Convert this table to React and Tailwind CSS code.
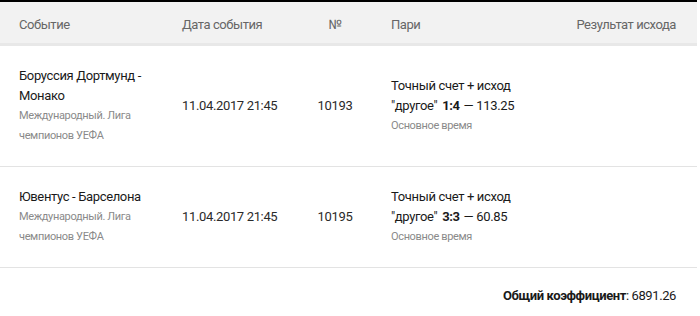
const bets = [
  {
    id: 10193,
    event: "Боруссия Дортмунд - Монако",
    league: "Международный. Лига чемпионов УЕФА",
    date: "11.04.2017 21:45",
    score: "1:4",
    odds: "113.25",
  },
  {
    id: 10195,
    event: "Ювентус - Барселона",
    league: "Международный. Лига чемпионов УЕФА",
    date: "11.04.2017 21:45",
    score: "3:3",
    odds: "60.85",
  },
];

export default function App() {
  return (
    <div className="w-[700px] bg-white font-['Roboto',sans-serif] text-[13px] tracking-[-0.35px]">
      <div className="w-[697px] border-t-2 border-black">
        <table className="w-full table-fixed border-collapse">
          <colgroup>
            <col className="w-[182px]" />
            <col className="w-[118px]" />
            <col className="w-[70px]" />
            <col className="w-[175px]" />
            <col />
          </colgroup>
          <thead>
            <tr className="h-[42px] bg-[#f2f2f2] border-b-[3px] border-[#e8e8e8] text-[#666] tracking-[-0.45px]">
              <th className="pt-[4px] pl-[19px] text-left font-normal">Событие</th>
              <th className="pt-[4px] text-left font-normal">Дата события</th>
              <th className="pt-[4px] text-center font-normal">№</th>
              <th className="pt-[4px] pl-[21px] text-left font-normal">Пари</th>
              <th className="pt-[4px] pr-[21px] text-right font-normal">Результат исхода</th>
            </tr>
          </thead>
          <tbody>
            {bets.map((b) => (
              <tr key={b.id} className="border-b border-[#e3e3e3] align-middle">
                <td className="pl-[19px] pr-[20px] py-5 leading-5">
                  <div className="text-[#1a1a1a]">{b.event}</div>
                  <div className="text-[11px] text-[#8a8a8a]">{b.league}</div>
                </td>
                <td className="text-[#2a2a2a]">{b.date}</td>
                <td className="text-center text-[#2a2a2a]">{b.id}</td>
                <td className="pl-[21px] pr-3 leading-5">
                  <div className="text-[#1a1a1a]">
                    Точный счет + исход "другое"{" "}
                    <b className="ml-[2px] mr-[1px] font-bold">{b.score}</b> — {b.odds}
                  </div>
                  <div className="text-[11px] text-[#8a8a8a]">Основное время</div>
                </td>
                <td></td>
              </tr>
            ))}
          </tbody>
        </table>
        <div className="flex justify-end pr-[21px] pt-[18px] text-[#1a1a1a] tracking-[-0.4px]">
          <span>
            <b className="font-bold">Общий коэффициент</b>: 6891.26
          </span>
        </div>
      </div>
    </div>
  );
}
